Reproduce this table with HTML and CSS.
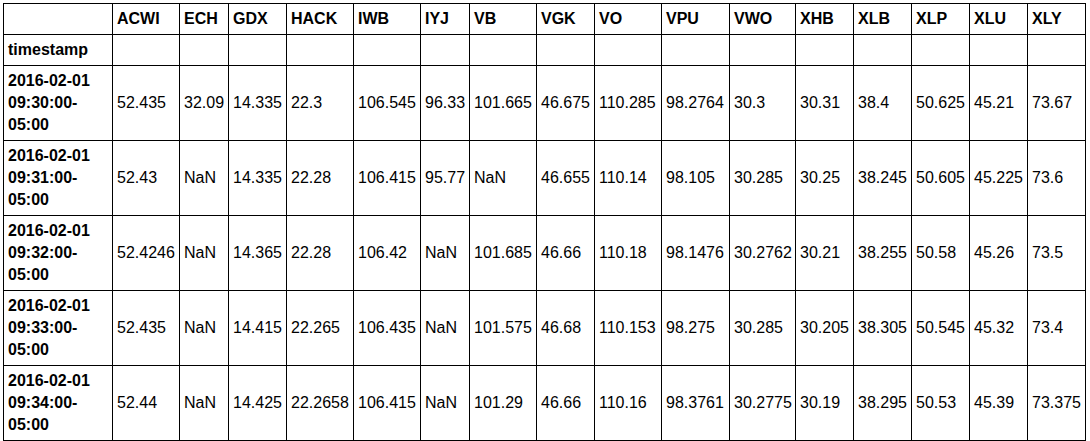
FILE: index.html
```html
<!DOCTYPE html>
<html>
<head>
<meta charset="utf-8">
<link rel="stylesheet" href="styles.css">
</head>
<body>
<table class="df">
<colgroup>
<col class="w109"><col class="w67"><col class="w49"><col class="w58"><col class="w67"><col class="w67"><col class="w49"><col class="w67"><col class="w58"><col class="w67"><col class="w68"><col class="w66"><col class="w58"><col class="w58"><col class="w58"><col class="w58"><col class="w58">
</colgroup>
<thead>
<tr><th></th><th>ACWI</th><th>ECH</th><th>GDX</th><th>HACK</th><th>IWB</th><th>IYJ</th><th>VB</th><th>VGK</th><th>VO</th><th>VPU</th><th>VWO</th><th>XHB</th><th>XLB</th><th>XLP</th><th>XLU</th><th>XLY</th></tr>
<tr><th>timestamp</th><th></th><th></th><th></th><th></th><th></th><th></th><th></th><th></th><th></th><th></th><th></th><th></th><th></th><th></th><th></th><th></th></tr>
</thead>
<tbody>
<tr><th>2016-02-01 09:30:00-05:00</th><td>52.435</td><td>32.09</td><td>14.335</td><td>22.3</td><td>106.545</td><td>96.33</td><td>101.665</td><td>46.675</td><td>110.285</td><td>98.2764</td><td>30.3</td><td>30.31</td><td>38.4</td><td>50.625</td><td>45.21</td><td>73.67</td></tr>
<tr><th>2016-02-01 09:31:00-05:00</th><td>52.43</td><td>NaN</td><td>14.335</td><td>22.28</td><td>106.415</td><td>95.77</td><td>NaN</td><td>46.655</td><td>110.14</td><td>98.105</td><td>30.285</td><td>30.25</td><td>38.245</td><td>50.605</td><td>45.225</td><td>73.6</td></tr>
<tr><th>2016-02-01 09:32:00-05:00</th><td>52.4246</td><td>NaN</td><td>14.365</td><td>22.28</td><td>106.42</td><td>NaN</td><td>101.685</td><td>46.66</td><td>110.18</td><td>98.1476</td><td>30.2762</td><td>30.21</td><td>38.255</td><td>50.58</td><td>45.26</td><td>73.5</td></tr>
<tr><th>2016-02-01 09:33:00-05:00</th><td>52.435</td><td>NaN</td><td>14.415</td><td>22.265</td><td>106.435</td><td>NaN</td><td>101.575</td><td>46.68</td><td>110.153</td><td>98.275</td><td>30.285</td><td>30.205</td><td>38.305</td><td>50.545</td><td>45.32</td><td>73.4</td></tr>
<tr><th>2016-02-01 09:34:00-05:00</th><td>52.44</td><td>NaN</td><td>14.425</td><td>22.2658</td><td>106.415</td><td>NaN</td><td>101.29</td><td>46.66</td><td>110.16</td><td>98.3761</td><td>30.2775</td><td>30.19</td><td>38.295</td><td>50.53</td><td>45.39</td><td>73.375</td></tr>
</tbody>
</table>
</body>
</html>
```
FILE: styles.css
```css
html, body {
  margin: 0;
  background: #fff;
}
body {
  padding: 3px;
  font-family: "Liberation Sans", Arial, sans-serif;
  font-size: 16px;
  line-height: 22px;
  color: #000;
}
.df {
  border-collapse: collapse;
  table-layout: fixed;
  width: 1083px;
}
.df th, .df td {
  border: 1px solid #000;
  padding: 4px;
  text-align: left;
  vertical-align: middle;
  overflow: hidden;
}
.df th {
  font-weight: bold;
}
.df td {
  font-weight: normal;
}
.w109 { width: 109px; }
.w67 { width: 67px; }
.w49 { width: 49px; }
.w58 { width: 58px; }
.w68 { width: 68px; }
.w66 { width: 66px; }
```
